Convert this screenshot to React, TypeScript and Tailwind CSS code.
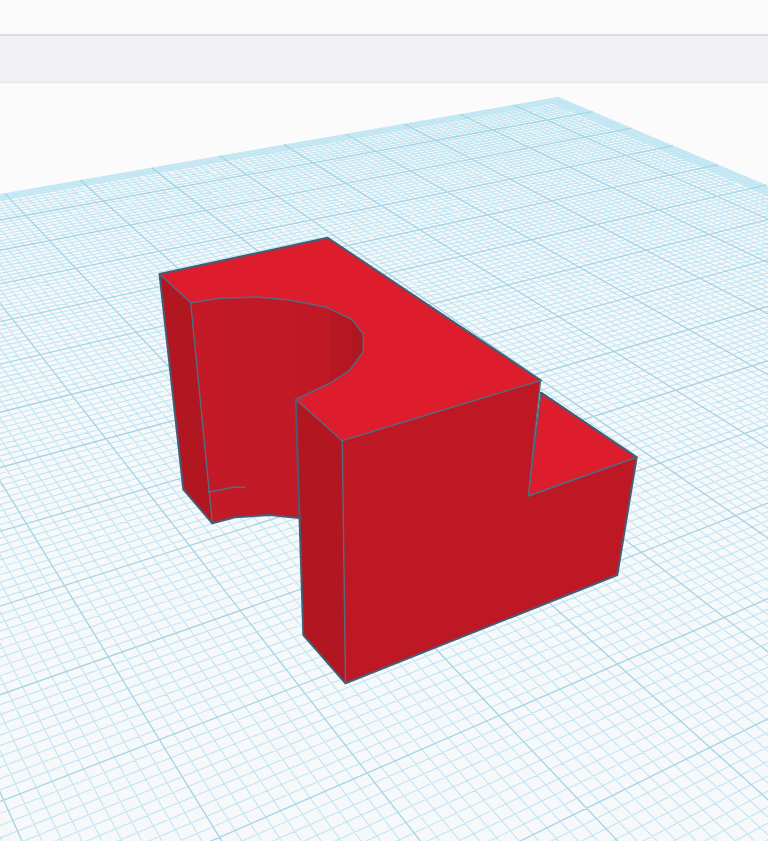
import React from "react";

const P0 = [547, 120];
const V2 = [-516, -357];
const V1 = [2823, -296];
const A = -0.0345;
const B = -0.0233;
const I0 = -0.95;
const J0 = -0.88;

function pt(i: number, j: number): [number, number] {
  const w = 1 + A * i + B * j;
  return [
    (P0[0] + A * i * V2[0] + B * j * V1[0]) / w,
    (P0[1] + A * i * V2[1] + B * j * V1[1]) / w,
  ];
}
const fmt = (p: [number, number]) => `${p[0].toFixed(2)},${p[1].toFixed(2)}`;
const MAX = 30;
const quad = (i0: number, i1: number, j0: number, j1: number) =>
  [pt(i0, j0), pt(i1, j0), pt(i1, j1), pt(i0, j1)].map(fmt).join(" ");

const limitJ = (i: number) => Math.min(MAX, (0.9 + A * i) / -B);
const limitI = (j: number) => Math.min(MAX, (0.9 + B * j) / -A);

let minorD = "";
let majorD = "";
for (let k = -9; k <= MAX * 10; k++) {
  const v = k / 10;
  const seg = (a: [number, number], b: [number, number]) => `M${fmt(a)}L${fmt(b)}`;
  let d = "";
  const jEnd = limitJ(v);
  if (jEnd > J0) d += seg(pt(v, J0), pt(v, jEnd));
  const iEnd = limitI(v);
  if (v > J0 && iEnd > I0) d += seg(pt(I0, v), pt(iEnd, v));
  if (k % 10 === 0) majorD += d;
  else minorD += d;
}

const plate = [pt(I0, J0), pt(limitI(J0), J0), pt(I0, limitJ(I0))].map(fmt).join(" ");
const bandA = quad(I0, I0 + 0.27, J0, limitJ(I0));
const bandB = quad(I0, limitI(J0), J0, J0 + 0.27);

const arc =
  "190.7,302.7 220,298.3 256.7,297 290,300 326.7,307.3 351.7,319.3 363.3,334 363.3,351.7 349.3,370.7 328.3,384 295.7,399.3";
const wall = `${arc} 299,518.3 270,515 235,517.3 212.3,523.3`;
const strips: [string, string][] = [
  ["190,296 223,296 232,525 212,525", "#c41a28"],
  ["223,296 297,296 302,525 232,525", "#c21926"],
  ["297,296 330,296 332,400 297,400", "#c01824"],
  ["330,296 352,296 352,380 330,400", "#b71722"],
  ["352,296 366,296 366,375 352,380", "#ae1620"],
];

export default function App() {
  return (
    <div className="flex h-[841px] w-full flex-col overflow-hidden bg-[#fbfbfb]">
      <div className="h-[36px] shrink-0 border-b-2 border-[#dcdee3] bg-[#fafafa]" />
      <div className="h-[47px] shrink-0 border-b border-[#e6e6ea] bg-[#f1f1f3]" />
      <div className="min-h-0 flex-1">
        <svg className="block h-full w-full" viewBox="0 83 768 758" preserveAspectRatio="none">
          <defs>
            <clipPath id="wall-clip">
              <polygon points={wall} />
            </clipPath>
          </defs>

          <polygon points={plate} fill="#f7f8f9" />
          <polygon points={bandA} fill="#cbeaf4" />
          <polygon points={bandB} fill="#cbeaf4" />
          <path d={minorD} fill="none" stroke="#c0e6f3" strokeWidth="1.1" />
          <path d={majorD} fill="none" stroke="#a3d4e6" strokeWidth="1.3" />

          <g stroke="#4a667d" strokeLinejoin="round" strokeLinecap="round">
            <polygon points="541,392.7 636.7,457.3 528.3,496" fill="#dd1c2c" strokeWidth="1.5" />

            <polygon points={wall} fill="#c21926" stroke="none" />
            <g clipPath="url(#wall-clip)">
              {strips.map(([p, c]) => (
                <polygon key={p} points={p} fill={c} stroke="none" />
              ))}
            </g>

            <polygon points="159.5,274 190.7,302.7 212.3,523.3 183.3,489.3" fill="#b21621" stroke="none" />

            <polygon
              points="159.5,274 327.7,237.8 541,380.5 342.3,440.7 295.7,399.3 328.3,384 349.3,370.7 363.3,351.7 363.3,334 351.7,319.3 326.7,307.3 290,300 256.7,297 220,298.3 190.7,302.7"
              fill="#dd1c2c"
              stroke="none"
            />

            <polygon points="295.7,399.3 342.3,440.7 345.5,683.3 303.3,635" fill="#b21620" stroke="none" />
            <polygon
              points="342.3,440.7 540.5,380.5 528.3,496 636.7,457.3 617.3,575 345.5,683.3"
              fill="#bd1823"
              stroke="none"
            />

            <g fill="none" strokeWidth="1.4" stroke="#566a80">
              <polyline points={arc} />
              <polyline points="159.5,274 190.7,302.7 212.3,523.3" />
              <polyline points="208.3,492.3 233,487.3 245,487.3" />
              <polyline points="295.7,399.3 342.3,440.7 540.5,380.5" />
              <polyline points="342.3,440.7 345.5,683.3" />
              <polyline points="540.5,380.5 528.3,496 636.7,457.3" />
            </g>

            <g fill="none" strokeWidth="2" stroke="#435e76">
              <polyline points="212.3,523.3 183.3,489.3 159.5,274 327.7,237.8 541,380.5" />
              <polyline points="541,392.7 636.7,457.3 617.3,575 345.5,683.3 303.3,635 295.7,399.3" />
              <polyline points="212.3,523.3 235,517.3 270,515 301,518.3" />
            </g>
          </g>
        </svg>
      </div>
    </div>
  );
}
